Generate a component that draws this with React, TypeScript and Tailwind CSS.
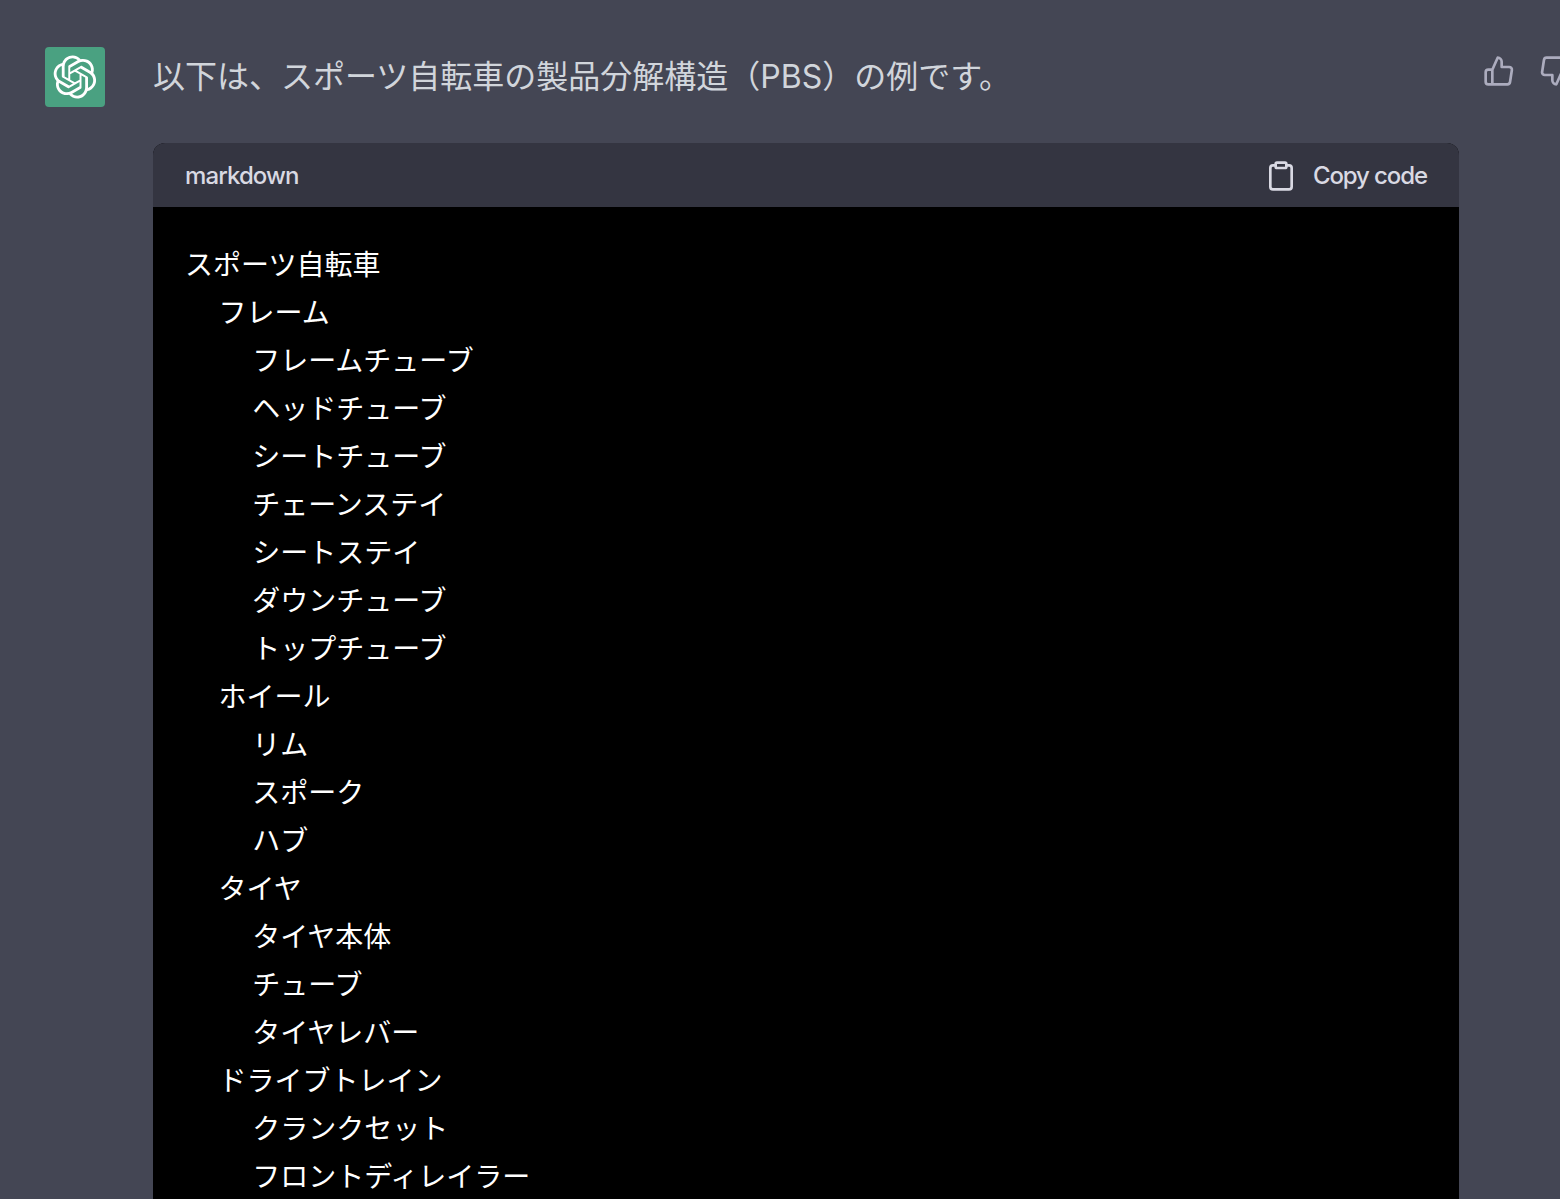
const LOGO = "M37.5324 16.8707C37.9808 15.5241 38.1363 14.0974 37.9886 12.6859C37.8409 11.2744 37.3934 9.91076 36.676 8.68622C35.6126 6.83404 33.9882 5.3676 32.0373 4.4985C30.0864 3.62941 27.9098 3.40259 25.8215 3.85078C24.8796 2.7893 23.7219 1.94125 22.4257 1.36341C21.1295 0.785575 19.7249 0.491269 18.3058 0.500197C16.1708 0.495044 14.0893 1.16803 12.3614 2.42214C10.6335 3.67624 9.34853 5.44666 8.6917 7.47815C7.30085 7.76286 5.98686 8.3414 4.8377 9.17505C3.68854 10.0087 2.73073 11.0782 2.02839 12.312C0.956464 14.1591 0.498905 16.2988 0.721698 18.4228C0.944492 20.5467 1.83612 22.5449 3.268 24.1293C2.81966 25.4759 2.66413 26.9026 2.81182 28.3141C2.95951 29.7256 3.40701 31.0892 4.12437 32.3138C5.18791 34.1659 6.8123 35.6322 8.76321 36.5013C10.7141 37.3704 12.8907 37.5973 14.9789 37.1492C15.9208 38.2107 17.0786 39.0587 18.3747 39.6366C19.6709 40.2144 21.0755 40.5087 22.4946 40.4998C24.6307 40.5054 26.7133 39.8321 28.4418 38.5772C30.1704 37.3223 31.4556 35.5506 32.1119 33.5179C33.5027 33.2332 34.8167 32.6547 35.9659 31.821C37.115 30.9874 38.0728 29.9178 38.7752 28.684C39.8458 26.8371 40.3023 24.6979 40.0789 22.5748C39.8556 20.4517 38.9639 18.4544 37.5324 16.8707ZM22.4978 37.8849C20.7443 37.8874 19.0459 37.2733 17.6994 36.1501C17.7601 36.117 17.8666 36.0586 17.936 36.0161L25.9004 31.4156C26.1003 31.3019 26.2663 31.137 26.3813 30.9378C26.4964 30.7386 26.5563 30.5124 26.5549 30.2825V19.0542L29.9213 20.998C29.9389 21.0068 29.9541 21.0198 29.9656 21.0359C29.977 21.052 29.9842 21.0707 29.9867 21.0902V30.3889C29.9842 32.375 29.1946 34.2791 27.7909 35.6841C26.3872 37.0892 24.4838 37.8806 22.4978 37.8849ZM6.39227 31.0064C5.51397 29.4888 5.19742 27.7107 5.49804 25.9832C5.55718 26.0187 5.66048 26.0818 5.73461 26.1244L13.699 30.7248C13.8975 30.8408 14.1233 30.902 14.3532 30.902C14.583 30.902 14.8088 30.8408 15.0073 30.7248L24.731 25.1103V28.9979C24.7321 29.0177 24.7283 29.0376 24.7199 29.0556C24.7115 29.0736 24.6988 29.0893 24.6829 29.1012L16.6317 33.7497C14.9096 34.7416 12.8643 35.0097 10.9447 34.4954C9.02506 33.9811 7.38785 32.7263 6.39227 31.0064ZM4.29707 13.6194C5.17156 12.0998 6.55279 10.9364 8.19885 10.3327C8.19885 10.4013 8.19491 10.5228 8.19491 10.6071V19.808C8.19351 20.0378 8.25334 20.2638 8.36823 20.4629C8.48312 20.6619 8.64893 20.8267 8.84863 20.9404L18.5723 26.5542L15.206 28.4979C15.1894 28.5089 15.1703 28.5155 15.1505 28.5173C15.1307 28.5191 15.1107 28.516 15.0924 28.5082L7.04046 23.8557C5.32135 22.8601 4.06716 21.2235 3.55289 19.3046C3.03862 17.3858 3.30624 15.3413 4.29707 13.6194ZM31.955 20.0556L22.2312 14.4411L25.5976 12.4981C25.6142 12.4872 25.6333 12.4805 25.6531 12.4787C25.6729 12.4769 25.6928 12.4801 25.7111 12.4879L33.7631 17.1364C34.9967 17.849 36.0017 18.8982 36.6606 20.1613C37.3194 21.4244 37.6047 22.849 37.4832 24.2684C37.3617 25.6878 36.8382 27.0432 35.9743 28.1759C35.1103 29.3086 33.9415 30.1717 32.6047 30.6641C32.6047 30.5947 32.6047 30.4733 32.6047 30.3889V21.188C32.6066 20.9586 32.5474 20.7328 32.4332 20.5338C32.319 20.3348 32.154 20.1698 31.955 20.0556ZM35.3055 15.0128C35.2464 14.9765 35.1431 14.9142 35.069 14.8717L27.1045 10.2712C26.906 10.1554 26.6803 10.0943 26.4504 10.0943C26.2206 10.0943 25.9948 10.1554 25.7963 10.2712L16.0726 15.8858V11.9982C16.0715 11.9783 16.0753 11.9585 16.0837 11.9405C16.0921 11.9225 16.1048 11.9068 16.1207 11.8949L24.1719 7.25025C25.4053 6.53903 26.8158 6.19376 28.2383 6.25482C29.6608 6.31589 31.0364 6.78077 32.2044 7.59508C33.3723 8.40939 34.2842 9.53945 34.8334 10.8531C35.3826 12.1667 35.5464 13.6095 35.3055 15.0128ZM14.2424 21.9419L10.8752 19.9981C10.8576 19.9893 10.8423 19.9763 10.8309 19.9602C10.8195 19.9441 10.8122 19.9254 10.8098 19.9058V10.6071C10.8107 9.18295 11.2173 7.78848 11.9819 6.58696C12.7466 5.38544 13.8377 4.42659 15.1275 3.82264C16.4173 3.21869 17.8524 2.99464 19.2649 3.1767C20.6775 3.35876 22.0089 3.93941 23.1034 4.85067C23.0427 4.88379 22.937 4.94215 22.8668 4.98473L14.9024 9.58517C14.7025 9.69878 14.5366 9.86356 14.4215 10.0626C14.3065 10.2616 14.2466 10.4877 14.2479 10.7175L14.2424 21.9419ZM16.071 17.9991L20.4018 15.4978L24.7325 17.9975V22.9985L20.4018 25.4983L16.071 22.9985V17.9991Z";

const CODE = `スポーツ自転車
  フレーム
    フレームチューブ
    ヘッドチューブ
    シートチューブ
    チェーンステイ
    シートステイ
    ダウンチューブ
    トップチューブ
  ホイール
    リム
    スポーク
    ハブ
  タイヤ
    タイヤ本体
    チューブ
    タイヤレバー
  ドライブトレイン
    クランクセット
    フロントディレイラー`;

export default function App() {
  return (
    <div className="h-[1199px] w-[1560px] overflow-hidden bg-[#444654] font-['Inter','Liberation_Sans',sans-serif]">
      <div className="flex pl-[45px] pt-[47px]">
        <div className="flex h-[60px] w-[60px] shrink-0 items-center justify-center rounded-[4px] bg-[#4aa181]">
          <svg viewBox="0 0 41 41" className="h-[44px] w-[44px]" fill="white">
            <path d={LOGO} />
          </svg>
        </div>
        <div className="ml-[48px] w-[1306px] shrink-0">
          <p className="h-[60px] font-['Inter','Noto_Sans_CJK_JP',sans-serif] text-[32px] leading-[60px] text-[#d1d5db]">
            以下は、スポーツ自転車の製品分解構造（PBS）の例です。
          </p>
          <div className="mt-[36px] overflow-hidden rounded-t-[12px] bg-black">
            <div className="flex h-[64px] items-center justify-between bg-[#343541] px-[32px] pt-[2px] text-[24px] font-medium tracking-[-0.9px] text-[#d9d9e3]">
              <span>markdown</span>
              <div className="flex items-center gap-[16px]">
                <svg viewBox="0 0 24 24" className="h-[32px] w-[32px]" fill="none" stroke="currentColor" strokeWidth="2" strokeLinecap="round" strokeLinejoin="round">
                  <path d="M16 4h2a2 2 0 0 1 2 2v14a2 2 0 0 1-2 2H6a2 2 0 0 1-2-2V6a2 2 0 0 1 2-2h2" />
                  <rect x="8" y="2" width="8" height="4" rx="1" ry="1" />
                </svg>
                <span className="tracking-[-1.1px]">Copy code</span>
              </div>
            </div>
            <pre className="h-[1000px] px-[32px] pt-[37px] pb-[32px] font-['Liberation_Mono','Noto_Sans_CJK_JP',monospace] text-[28px] leading-[48px] text-white">{CODE}</pre>
          </div>
        </div>
        <div className="ml-[24px] mt-[8px] flex shrink-0 gap-[24px] text-[#acacbe]">
          <svg viewBox="0 0 24 24" className="h-[32px] w-[32px]" fill="none" stroke="currentColor" strokeWidth="2" strokeLinecap="round" strokeLinejoin="round">
            <path d="M14 9V5a3 3 0 0 0-3-3l-4 9v11h11.28a2 2 0 0 0 2-1.7l1.38-9a2 2 0 0 0-2-2.3zM7 22H4a2 2 0 0 1-2-2v-7a2 2 0 0 1 2-2h3" />
          </svg>
          <svg viewBox="0 0 24 24" className="h-[32px] w-[32px]" fill="none" stroke="currentColor" strokeWidth="2" strokeLinecap="round" strokeLinejoin="round">
            <path d="M10 15v4a3 3 0 0 0 3 3l4-9V2H5.72a2 2 0 0 0-2 1.7l-1.38 9a2 2 0 0 0 2 2.3zM17 2h3a2 2 0 0 1 2 2v7a2 2 0 0 1-2 2h-3" />
          </svg>
        </div>
      </div>
    </div>
  );
}
